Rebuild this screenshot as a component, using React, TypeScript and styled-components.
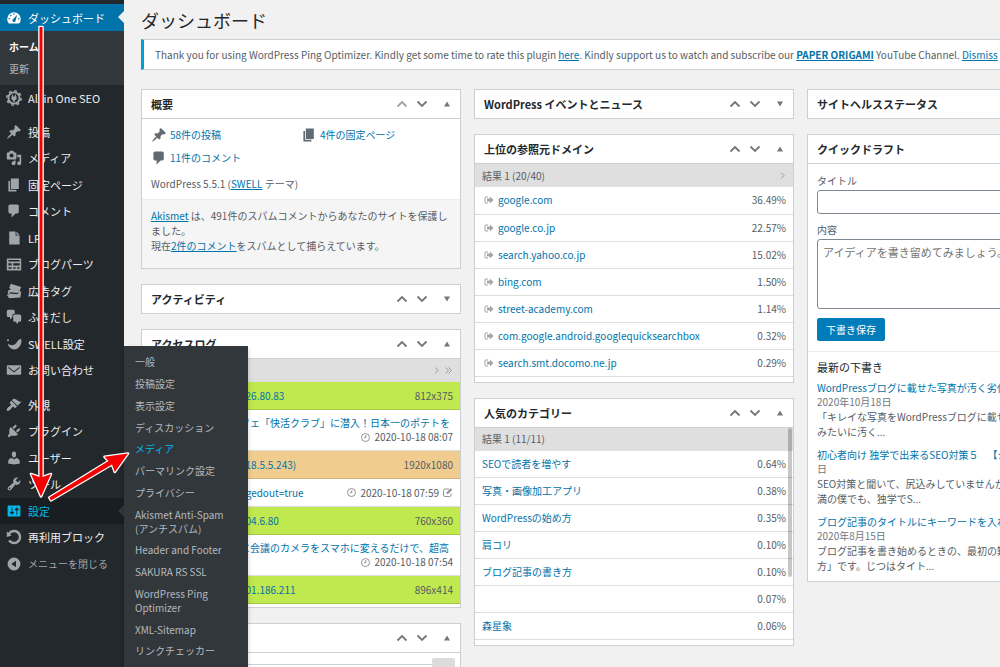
import React from "react";
import styled, { createGlobalStyle, css } from "styled-components";

const Global = createGlobalStyle`
  *, *::before, *::after { box-sizing: border-box; }
  body {
    margin: 0;
    background: #f1f1f1;
    color: #555d66;
    font-family: "Noto Sans CJK JP", "Open Sans", sans-serif;
    font-size: 10px;
    line-height: 14px;
  }
  h1, h2, h3, p, ul { margin: 0; padding: 0; }
  ul { list-style: none; }
  a { color: #0073aa; text-decoration: none; }
  button, input, textarea { font-family: inherit; }
`;

/* ---------- icons ---------- */

const Glyph = styled.svg<{ $size?: number }>`
  width: ${(p) => p.$size ?? 16}px;
  height: ${(p) => p.$size ?? 16}px;
  flex: none;
  display: block;
  fill: currentColor;
`;

const paths: Record<string, string> = {
  dashboard:
    "M3.76 17h12.48A7.98 7.98 0 0 0 18.5 11.2 8.5 8.5 0 0 0 10 2.8a8.5 8.5 0 0 0-8.5 8.4c0 2.200.8 4.300 2.260 5.800zM10 4a1 1 0 1 1 0 2 1 1 0 0 1 0-2zM6 6a1 1 0 1 1 0 2 1 1 0 0 1 0-2zm-2 4a1 1 0 1 1 0 2 1 1 0 0 1 0-2zm12 0a1 1 0 1 1 0 2 1 1 0 0 1 0-2zm-7.370 1.550L14 6l-2 7a2 2 0 1 1-3.370-1.450z",
  pin: "M10.44 3.02l1.82-1.82 6.36 6.35-1.83 1.82c-1.05-.68-2.48-.57-3.41.36l-.75.75c-.92.93-1.04 2.35-.35 3.41l-1.83 1.82-2.41-2.41-2.8 2.79c-.42.42-3.38 2.71-3.8 2.29s1.86-3.39 2.28-3.81l2.79-2.79L4.1 9.36l1.83-1.82c1.05.69 2.48.57 3.4-.36l.75-.75c.93-.92 1.05-2.35.36-3.41z",
  media:
    "M13 11V4c0-.55-.45-1-1-1h-1.67L9 1H5L3.67 3H2c-.55 0-1 .45-1 1v7c0 .55.45 1 1 1h10c.55 0 1-.45 1-1zM7 4.5c1.38 0 2.5 1.12 2.5 2.5S8.38 9.5 7 9.5 4.500 8.38 4.500 7 5.620 4.500 7 4.500zM14 6h5v10.500c0 1.380-1.120 2.500-2.500 2.500S14 17.880 14 16.500s1.120-2.500 2.500-2.500c.17 0 .34.02.5.05V9h-3V6zm-4 8.050V13h2v3.500c0 1.380-1.120 2.500-2.500 2.500S7 17.880 7 16.500 8.120 14 9.500 14c.17 0 .34.02.5.05z",
  page: "M6 15V2h10v13H6zm-1 1h8v2H3V5h2v11z",
  comment:
    "M5 2h9q.82 0 1.41.59T16 4v7q0 .82-.59 1.41T14 13h-2l-5 5v-5H5q-.82 0-1.41-.59T3 11V4q0-.82.59-1.41T5 2z",
  file: "M4 2h8v5h5v11H4zM13 2l4 4h-4z",
  parts:
    "M1 3h18v15H1zM3 5v2h14V5zM3 9v3h4V9zm6 0v3h8V9zM3 14v2h4v-2zm6 0v2h3v-2zm5 0v2h3v-2z",
  tickets:
    "M6 1l13 4-2 5 2 1-1 7-14 1-3-4 3-1-2-1 1-4 3-1-2-2zM4 13l10 1 3-3-3 1.500-9-1z",
  chat: "M11 6h-.82C9.07 6 8 7.2 8 8.16V10l-3 3v-3H3c-1.1 0-2-.9-2-2V3c0-1.1.9-2 2-2h6c1.1 0 2 .9 2 2v3zm0 1h6c1.1 0 2 .9 2 2v5c0 1.1-.9 2-2 2h-2v3l-3-3h-1c-1.1 0-2-.9-2-2V9c0-1.1.9-2 2-2z",
  swell:
    "M19 3.500c.8 4 0 8-3 11-3.500 3.500-9 3-12-1C3 12.500 2.500 11 2.500 9.500c2 2 5 2.500 7.500 1.500C14 9.500 13.500 5 19 3.500zM2.500 4a1.300 1.300 0 1 1 0 2.600 1.300 1.300 0 0 1 0-2.600z",
  mail: "M2 4h16q1 0 1 1v10q0 1-1 1H2q-1 0-1-1V5q0-1 1-1zm1 2v1.500l7 5.500 7-5.500V6l-7 5.500z",
  brush:
    "M14.480 11.060L7.410 3.990l1.500-1.500c.5-.56 2.300-.47 3.510.32 1.210.8 1.430 1.280 2.910 2.100 1.180.64 2.450 1.260 4.450.85zm-.71.71L6.700 4.700 4.930 6.470c-.39.39-.39 1.020 0 1.410l1.060 1.060c.39.39.39 1.030 0 1.420-.6.6-1.430 1.110-2.210 1.690-.35.26-.7.53-1.010.84C1.430 14.230.4 16.080 1.400 17.070c.99 1 2.840-.03 4.180-1.360.31-.31.58-.66.85-1.020.57-.78 1.080-1.610 1.690-2.210.39-.39 1.020-.39 1.410 0l1.060 1.060c.39.39 1.020.39 1.410 0z",
  plugin:
    "M13.110 4.360L9.870 7.600 8 5.730l3.240-3.240c.35-.34 1.050-.2 1.560.32.52.51.66 1.210.31 1.550zm-8 1.770l.91-1.120 9.010 9.010-1.190.84c-.71.71-2.630 1.160-3.820 1.160H6.140L4.900 17.260c-.59.59-1.540.59-2.120 0-.59-.58-.59-1.530 0-2.120l1.240-1.240v-3.880c0-1.130.4-3.190 1.090-3.890zm7.260 3.970l3.240-3.240c.34-.35 1.040-.21 1.550.31.52.51.66 1.210.31 1.550l-3.240 3.250z",
  user: "M10 9.25c-2.270 0-2.730-3.440-2.730-3.440C7 4.020 7.820 2 9.970 2c2.160 0 2.980 2.020 2.710 3.810 0 0-.41 3.440-2.680 3.440zm0 2.570L12.720 10c2.390 0 4.520 2.330 4.520 4.530v2.490s-3.650 1.130-7.240 1.130c-3.650 0-7.240-1.130-7.240-1.130v-2.490c0-2.250 1.940-4.480 4.470-4.480z",
  wrench:
    "M16.680 9.770c-1.340 1.340-3.300 1.670-4.950.99l-5.410 6.520c-.99.99-2.590.99-3.580 0s-.99-2.590 0-3.570l6.520-5.420c-.68-1.650-.35-3.610.99-4.950 1.280-1.280 3.120-1.620 4.720-1.060l-2.890 2.890 2.820 2.820 2.860-2.870c.53 1.580.18 3.390-1.080 4.650zM3.810 16.210c.4.39 1.040.39 1.430 0 .4-.4.4-1.040 0-1.430-.39-.4-1.030-.4-1.430 0-.39.39-.39 1.030 0 1.430z",
  settings:
    "M18 16V4c0-.55-.45-1-1-1H3c-.55 0-1 .45-1 1v12c0 .55.45 1 1 1h14c.55 0 1-.45 1-1zM8 11h1c.55 0 1 .45 1 1s-.45 1-1 1H8v1.500c0 .28-.22.5-.5.5s-.5-.22-.5-.5V13H6c-.55 0-1-.45-1-1s.45-1 1-1h1V5.500c0-.28.22-.5.5-.5s.5.22.5.5V11zm5-2h-1c-.55 0-1-.45-1-1s.45-1 1-1h1V5.500c0-.28.22-.5.5-.5s.5.22.5.5V7h1c.55 0 1 .45 1 1s-.45 1-1 1h-1v5.500c0 .28-.22.5-.5.5s-.5-.22-.5-.5V9z",
  rotate:
    "M10.250 1.020c5.100 0 8.750 4.040 8.750 9s-3.650 9-8.750 9c-3.200 0-6.020-1.590-7.680-3.990l2.590-1.520c1.100 1.500 2.860 2.510 4.840 2.510 3.300 0 6-2.790 6-6s-2.700-6-6-6c-1.970 0-3.720 1-4.820 2.490L7 8.020l-6 2v-7L2.890 4.600c1.690-2.170 4.360-3.580 7.360-3.580z",
  collapse: "M10 2a8 8 0 1 1 0 16 8 8 0 0 1 0-16zM12.500 6v8L6.500 10z",
  signout:
    "M8 3H4Q1 3 1 6v8q0 3 3 3h4v-2H4q-1 0-1-1V6q0-1 1-1h4zM12 3l7 7-7 7v-4H6V7h6z",
};

function Icon({ name, size }: { name: string; size?: number }) {
  if (name === "gear") {
    return (
      <Glyph $size={size} viewBox="0 0 20 20" aria-hidden>
        <circle cx="10" cy="10" r="9" fill="none" stroke="currentColor" strokeWidth="2" strokeDasharray="3.5 3.570" />
        <circle cx="10" cy="10" r="7" fill="none" stroke="currentColor" strokeWidth="2.400" />
        <path d="M7.500 6h1.400v2h2.200V6h1.400v2h.8v2.500q0 2-2.300 2.400V15H9v-2.100q-2.300-.4-2.300-2.400V8h.8z" />
      </Glyph>
    );
  }
  return (
    <Glyph $size={size} viewBox="0 0 20 20" aria-hidden>
      <path fillRule="evenodd" d={paths[name]} />
    </Glyph>
  );
}

const LineGlyph = styled.svg<{ $w: number; $h: number }>`
  width: ${(p) => p.$w}px;
  height: ${(p) => p.$h}px;
  display: block;
  flex: none;
  fill: none;
  stroke: currentColor;
`;

const Clock = () => (
  <LineGlyph $w={9} $h={9} viewBox="0 0 18 18" strokeWidth="1.800" aria-hidden>
    <circle cx="9" cy="9" r="8" />
    <path d="M9.500 4v5.500H6" />
  </LineGlyph>
);

const Pencil = () => (
  <LineGlyph $w={10} $h={9} viewBox="0 0 20 18" strokeWidth="1.800" aria-hidden>
    <path d="M12 2H4Q1 2 1 5v9q0 3 3 3h9q3 0 3-3v-3" />
    <path d="M8 11l9-9" strokeWidth="4" />
  </LineGlyph>
);

/* ---------- frame ---------- */

const Page = styled.div`
  position: relative;
  display: flex;
  height: 100vh;
  overflow: hidden;
`;

const Sidebar = styled.nav`
  flex: none;
  width: 124px;
  padding-top: 4px;
  background: #23282d;
  font-size: 11px;
`;

const Group = styled.ul`
  margin-bottom: 8px;
  & > li:nth-child(even) { padding-bottom: 1px; }
`;

const MenuLink = styled.a<{ $tone?: "current" | "open" | "muted" }>`
  position: relative;
  display: flex;
  align-items: center;
  gap: 6px;
  height: 26px;
  padding-left: 6px;
  color: #eee;
  white-space: nowrap;
  & > svg { color: #a0a5aa; }
  ${(p) =>
    p.$tone === "current" &&
    css`
      height: 27px;
      background: #0073aa;
      color: #fff;
      & > svg { color: #fff; }
    `}
  ${(p) =>
    p.$tone === "open" &&
    css`
      background: #191e23;
      color: #00b9eb;
      & > svg { color: #00b9eb; }
    `}
  ${(p) => p.$tone === "muted" && css`color: #a0a5aa; font-size: 10px;`}
`;

const Notch = styled.span<{ $color: string }>`
  position: absolute;
  right: 0;
  top: 7px;
  border: 6px solid transparent;
  border-left-width: 0;
  border-right-color: ${(p) => p.$color};
`;

const HomeMenu = styled.ul`
  margin-bottom: 0;
  padding: 5px 0;
  background: #32373c;
  font-size: 10px;
`;

const HomeLink = styled.a<{ $active?: boolean }>`
  display: block;
  padding: 4px 9px;
  color: ${(p) => (p.$active ? "#fff" : "#b4b9be")};
  font-weight: ${(p) => (p.$active ? 600 : 400)};
`;

const Flyout = styled.ul`
  position: absolute;
  z-index: 2;
  left: 124px;
  top: 346px;
  width: 124px;
  padding: 5px 0 8px;
  background: #32373c;
  box-shadow: 0 3px 5px rgba(0, 0, 0, 0.2);
  & > li:nth-child(4n) { margin-bottom: -1px; }
`;

const FlyLink = styled.a<{ $active?: boolean }>`
  display: block;
  padding: 4px 11px;
  color: ${(p) => (p.$active ? "#00b9eb" : "#b4b9be")};
`;

const Arrows = styled.svg`
  position: absolute;
  z-index: 3;
  left: 0;
  top: 0;
  width: 140px;
  height: 510px;
  pointer-events: none;
  paint-order: stroke;
  stroke-linejoin: round;
`;

const Main = styled.main`
  flex: 1;
  min-width: 0;
  padding-left: 17px;
  overflow: hidden;
`;

const Wrap = styled.div`
  min-width: 986px;
`;

const Heading = styled.h1`
  padding: 7px 0 6px;
  color: #23282d;
  font-size: 18px;
  font-weight: 400;
  line-height: 26px;
`;

const Notice = styled.div`
  padding: 8px 11px 7px;
  border: 1px solid #ccd0d4;
  border-left: 3px solid #00a0d2;
  background: #fff;
  line-height: 14px;
  a { text-decoration: underline; }
  strong { font-weight: 600; }
`;

const Columns = styled.div`
  display: grid;
  grid-template-columns: repeat(3, minmax(320px, 1fr));
  gap: 13px;
  align-items: start;
  padding-top: 19px;
`;

const Column = styled.div`
  display: flex;
  flex-direction: column;
  gap: 15px;
  min-width: 0;
`;

/* ---------- panels ---------- */

const Panel = styled.section`
  position: relative;
  border: 1px solid #ccd0d4;
  background: #fff;
`;

const PanelHead = styled.header<{ $open: boolean }>`
  display: flex;
  align-items: center;
  height: ${(p) => (p.$open ? 29 : 28)}px;
  padding: 0 3px 0 9px;
  border-bottom: ${(p) => (p.$open ? "1px solid #ccd0d4" : "0")};
`;

const PanelTitle = styled.h2`
  flex: 1;
  color: #23282d;
  font-size: 11px;
  font-weight: 600;
  line-height: 16px;
  white-space: nowrap;
`;

const HeadButton = styled.button<{ $dim?: boolean; $end?: boolean }>`
  display: flex;
  align-items: center;
  justify-content: center;
  width: 20px;
  height: 20px;
  margin-left: ${(p) => (p.$end ? 5 : 0)}px;
  padding: 0;
  border: 0;
  background: none;
  color: ${(p) => (p.$dim ? "#a0a5aa" : "#72777c")};
`;

type BoxProps = { title: string; open?: boolean; first?: boolean; children?: React.ReactNode };

function Box({ title, open = false, first, children }: BoxProps) {
  return (
    <Panel>
      <PanelHead $open={open}>
        <PanelTitle>{title}</PanelTitle>
        <HeadButton type="button" aria-label="上に移動" $dim={first}>
          <LineGlyph $w={12} $h={8} viewBox="0 0 12 8" strokeWidth="1.800"><path d="M1.500 6.500L6 2l4.500 4.500" /></LineGlyph>
        </HeadButton>
        <HeadButton type="button" aria-label="下に移動">
          <LineGlyph $w={12} $h={8} viewBox="0 0 12 8" strokeWidth="1.800"><path d="M1.500 1.500L6 6l4.500-4.500" /></LineGlyph>
        </HeadButton>
        <HeadButton type="button" aria-label="パネルを切り替え" $end>
          <Glyph $size={6} viewBox="0 0 6 6"><path d={open ? "M0 5.500h6L3 .5z" : "M0 .5h6L3 5.500z"} /></Glyph>
        </HeadButton>
      </PanelHead>
      {children}
    </Panel>
  );
}

const Glance = styled.div`
  padding: 4px 9px 8px;
`;

const GlanceGrid = styled.ul`
  display: grid;
  grid-template-columns: 1fr 1fr;
  margin-bottom: 8px;
`;

const GlanceItem = styled.li`
  display: flex;
  align-items: center;
  gap: 3px;
  height: 23px;
  & > svg { color: #606a73; }
`;

const Underlined = styled.a`
  text-decoration: underline;
`;

const GlanceFoot = styled.div`
  padding: 8px 9px 15px;
  border-top: 1px solid #eee;
  background: #f5f5f5;
  line-height: 15px;
`;

const ResultBar = styled.div`
  display: flex;
  align-items: center;
  justify-content: space-between;
  height: 23px;
  padding: 0 7px;
  background: #dfdfdf;
`;

const Pager = styled.span`
  display: flex;
  gap: 6px;
  margin-right: 1px;
  color: #999;
`;

const Data = styled.table`
  width: 100%;
  border-collapse: collapse;
  margin-bottom: 5px;
  td {
    height: 27px;
    padding: 0 7px;
    border-bottom: 1px solid #ddd;
  }
  td:last-child { text-align: right; }
`;

const Domain = styled.a`
  display: flex;
  align-items: center;
  gap: 4px;
  padding-left: 2px;
  & > svg { color: #a5a5a5; }
`;

const ScrollThumb = styled.div`
  position: absolute;
  right: 1px;
  top: 29px;
  width: 4px;
  height: 149px;
  border-radius: 2px;
  background: rgba(0, 0, 0, 0.22);
`;

const LogRow = styled.div<{ $bg?: string }>`
  display: flex;
  flex-wrap: wrap;
  align-items: center;
  align-content: center;
  justify-content: space-between;
  min-height: 28px;
  padding: 6px 7px 6px 98px;
  border-bottom: 1px solid rgba(0, 0, 0, 0.13);
  background: ${(p) => p.$bg ?? "#fff"};
  white-space: nowrap;
`;

const LogList = styled.div`
  padding-bottom: 3px;
`;

const When = styled.span`
  display: flex;
  align-items: center;
  gap: 4px;
  margin-left: auto;
  & > svg { color: #888; }
`;

const TabStrip = styled.div`
  display: flex;
  align-items: flex-start;
  height: 60px;
  padding: 5px 5px 0 0;
`;

const TabRule = styled.div`
  flex: 1;
  margin-top: 6px;
  border-top: 1px solid #ccd0d4;
`;

const TabButton = styled.button`
  width: 23px;
  height: 24px;
  padding: 0 0 8px;
  border: 0;
  border-radius: 2px;
  background: #dcdcdc;
  color: #0073aa;
  font-size: 10px;
  line-height: 14px;
`;

const Form = styled.form`
  display: flex;
  flex-direction: column;
  align-items: flex-start;
  padding: 9px 9px 10px;
  border-bottom: 1px solid #eee;
`;

const Label = styled.label`
  height: 17px;
  line-height: 16px;
`;

const field = css`
  width: 100%;
  border: 1px solid #7e8993;
  border-radius: 3px;
  background: #fff;
  padding: 4px 5px;
  font-size: 11px;
  line-height: 16px;
`;

const Field = styled.input`
  ${field}
  height: 24px;
  margin-bottom: 8px;
`;

const Area = styled.textarea`
  ${field}
  height: 70px;
  margin-bottom: 9px;
  resize: none;
  white-space: nowrap;
  overflow: hidden;
  &::placeholder { color: #757575; }
`;

const Save = styled.button`
  height: 23px;
  padding: 0 8px;
  border: 1px solid #007cba;
  border-radius: 2px;
  background: #007cba;
  color: #fff;
  font-size: 10px;
`;

const Drafts = styled.div`
  padding: 7px 9px 8px;
  white-space: nowrap;
  overflow: hidden;
`;

const DraftsTitle = styled.h3`
  margin-bottom: 6px;
  color: #23282d;
  font-size: 11px;
  font-weight: 400;
  line-height: 16px;
`;

const Draft = styled.article`
  line-height: 15px;
  & + & { margin-top: 9px; }
  time { display: block; color: #72777c; line-height: 14px; }
  a { display: block; line-height: 14px; }
`;

/* ---------- data ---------- */

const contentMenu = [
  ["pin", "投稿"],
  ["media", "メディア"],
  ["page", "固定ページ"],
  ["comment", "コメント"],
  ["file", "LP"],
  ["parts", "ブログパーツ"],
  ["tickets", "広告タグ"],
  ["chat", "ふきだし"],
  ["swell", "SWELL設定"],
  ["mail", "お問い合わせ"],
];

const adminMenu = [
  ["brush", "外観"],
  ["plugin", "プラグイン"],
  ["user", "ユーザー"],
  ["wrench", "ツール"],
  ["settings", "設定"],
  ["rotate", "再利用ブロック"],
  ["collapse", "メニューを閉じる"],
];

const settingsMenu = [
  "一般",
  "投稿設定",
  "表示設定",
  "ディスカッション",
  "メディア",
  "パーマリンク設定",
  "プライバシー",
  "Akismet Anti-Spam (アンチスパム)",
  "Header and Footer",
  "SAKURA RS SSL",
  "WordPress Ping Optimizer",
  "XML-Sitemap",
  "リンクチェッカー",
];

const domains = [
  ["google.com", "36.49%"],
  ["google.co.jp", "22.57%"],
  ["search.yahoo.co.jp", "15.02%"],
  ["bing.com", "1.50%"],
  ["street-academy.com", "1.14%"],
  ["com.google.android.googlequicksearchbox", "0.32%"],
  ["search.smt.docomo.ne.jp", "0.29%"],
];

const categories = [
  ["SEOで読者を増やす", "0.64%"],
  ["写真・画像加工アプリ", "0.38%"],
  ["WordPressの始め方", "0.35%"],
  ["肩コリ", "0.10%"],
  ["ブログ記事の書き方", "0.10%"],
  ["", "0.07%"],
  ["森星象", "0.06%"],
];

const green = "#c0e84f";
const orange = "#f0cd8f";

const Next = () => (
  <LineGlyph $w={5} $h={7} viewBox="0 0 5 7" strokeWidth="1"><path d="M1 .5l3 3-3 3" /></LineGlyph>
);
const Last = () => (
  <LineGlyph $w={7} $h={7} viewBox="0 0 7 7" strokeWidth="1"><path d="M.5 .5l3 3-3 3M3.500 .5l3 3-3 3" /></LineGlyph>
);

export default function App() {
  return (
    <Page>
      <Global />
      <Sidebar>
        <MenuLink href="#" $tone="current">
          <Icon name="dashboard" />
          ダッシュボード
          <Notch $color="#f1f1f1" />
        </MenuLink>
        <HomeMenu>
          <li><HomeLink href="#" $active>ホーム</HomeLink></li>
          <li><HomeLink href="#">更新</HomeLink></li>
        </HomeMenu>
        <Group>
          <li><MenuLink href="#"><Icon name="gear" />All in One SEO</MenuLink></li>
        </Group>
        <Group>
          {contentMenu.map(([icon, label]) => (
            <li key={label}><MenuLink href="#"><Icon name={icon} />{label}</MenuLink></li>
          ))}
        </Group>
        <Group>
          {adminMenu.map(([icon, label]) => (
            <li key={label}>
              <MenuLink
                href="#"
                $tone={icon === "settings" ? "open" : icon === "collapse" ? "muted" : undefined}
              >
                <Icon name={icon} />
                {label}
                {icon === "settings" && <Notch $color="#32373c" />}
              </MenuLink>
            </li>
          ))}
        </Group>
      </Sidebar>

      <Main>
        <Wrap>
          <Heading>ダッシュボード</Heading>
          <Notice>
            Thank you for using WordPress Ping Optimizer. Kindly get some time to rate this plugin{" "}
            <a href="#">here</a>. Kindly support us to watch and subscribe our{" "}
            <a href="#"><strong>PAPER ORIGAMI</strong></a> YouTube Channel. <a href="#">Dismiss</a>
          </Notice>
          <Columns>
            <Column>
              <Box title="概要" open first>
                <Glance>
                  <GlanceGrid>
                    <GlanceItem><Icon name="pin" /><a href="#">58件の投稿</a></GlanceItem>
                    <GlanceItem><Icon name="page" /><a href="#">4件の固定ページ</a></GlanceItem>
                    <GlanceItem><Icon name="comment" /><a href="#">11件のコメント</a></GlanceItem>
                  </GlanceGrid>
                  <p>WordPress 5.5.1 (<Underlined href="#">SWELL</Underlined> テーマ)</p>
                </Glance>
                <GlanceFoot>
                  <p>
                    <Underlined href="#">Akismet</Underlined> は、491件のスパムコメントからあなたのサイトを保護しました。
                  </p>
                  <p>現在<Underlined href="#">2件のコメント</Underlined>をスパムとして捕らえています。</p>
                </GlanceFoot>
              </Box>
              <Box title="アクティビティ" />
              <Box title="アクセスログ" open>
                <ResultBar><span /><Pager><Next /><Last /></Pager></ResultBar>
                <LogList>
                  <LogRow $bg={green}><a href="#">126.80.83</a><span>812x375</span></LogRow>
                  <LogRow>
                    <a href="#">フェ「快活クラブ」に潜入！日本一のポテトを</a>
                    <When><Clock />2020-10-18 08:07</When>
                  </LogRow>
                  <LogRow $bg={orange}><a href="#">118.5.5.243)</a><span>1920x1080</span></LogRow>
                  <LogRow>
                    <a href="#">ggedout=true</a>
                    <When><Clock />2020-10-18 07:59 <Pencil /></When>
                  </LogRow>
                  <LogRow $bg={green}><a href="#">204.6.80</a><span>760x360</span></LogRow>
                  <LogRow>
                    <a href="#">に会議のカメラをスマホに変えるだけで、超高</a>
                    <When><Clock />2020-10-18 07:54</When>
                  </LogRow>
                  <LogRow $bg={green}><a href="#">101.186.211</a><span>896x414</span></LogRow>
                </LogList>
              </Box>
              <Box title="" open>
                <TabStrip><TabRule /><TabButton type="button">...</TabButton></TabStrip>
              </Box>
            </Column>

            <Column>
              <Box title="WordPress イベントとニュース" />
              <Box title="上位の参照元ドメイン" open>
                <ResultBar>結果 1 (20/40)<Pager><Next /></Pager></ResultBar>
                <Data>
                  <tbody>
                    {domains.map(([name, share]) => (
                      <tr key={name}>
                        <td><Domain href="#"><Icon name="signout" size={10} />{name}</Domain></td>
                        <td>{share}</td>
                      </tr>
                    ))}
                  </tbody>
                </Data>
              </Box>
              <Box title="人気のカテゴリー" open>
                <ResultBar>結果 1 (11/11)</ResultBar>
                <Data>
                  <tbody>
                    {categories.map(([name, share]) => (
                      <tr key={share + name}>
                        <td>{name && <a href="#">{name}</a>}</td>
                        <td>{share}</td>
                      </tr>
                    ))}
                  </tbody>
                </Data>
                <ScrollThumb />
              </Box>
            </Column>

            <Column>
              <Box title="サイトヘルスステータス" />
              <Box title="クイックドラフト" open>
                <Form>
                  <Label htmlFor="draft-title">タイトル</Label>
                  <Field id="draft-title" type="text" />
                  <Label htmlFor="draft-body">内容</Label>
                  <Area id="draft-body" placeholder="アイディアを書き留めてみましょう。" />
                  <Save type="button">下書き保存</Save>
                </Form>
                <Drafts>
                  <DraftsTitle>最新の下書き</DraftsTitle>
                  <Draft>
                    <a href="#">WordPressブログに載せた写真が汚く劣化</a>
                    <time>2020年10月18日</time>
                    <p>「キレイな写真をWordPressブログに載せ<br />みたいに汚く...</p>
                  </Draft>
                  <Draft>
                    <a href="#">初心者向け 独学で出来るSEO対策５ &nbsp; &nbsp;【ジ</a>
                    <time>日</time>
                    <p>SEO対策と聞いて、尻込みしていませんか<br />満の僕でも、独学でS...</p>
                  </Draft>
                  <Draft>
                    <a href="#">ブログ記事のタイトルにキーワードを入れ</a>
                    <time>2020年8月15日</time>
                    <p>ブログ記事を書き始めるときの、最初の難<br />方」です。じつはタイト...</p>
                  </Draft>
                </Drafts>
              </Box>
            </Column>
          </Columns>
        </Wrap>
      </Main>

      <Flyout>
        {settingsMenu.map((label, i) => (
          <li key={label}><FlyLink href="#" $active={i === 4}>{label}</FlyLink></li>
        ))}
      </Flyout>

      <Arrows viewBox="0 0 140 510" fill="#f40000" stroke="#fff" strokeWidth="2.600" aria-hidden>
        <path d="M39.500 27h3v450l8.500-3L41 496.500l-10-22.500 8.500 3z" />
        <path d="M49.300 497.500l59.200-36.500-4-4.200 23.500-3.300-13.200 18.500-2.800-7.500L51 500.400z" />
      </Arrows>
    </Page>
  );
}
